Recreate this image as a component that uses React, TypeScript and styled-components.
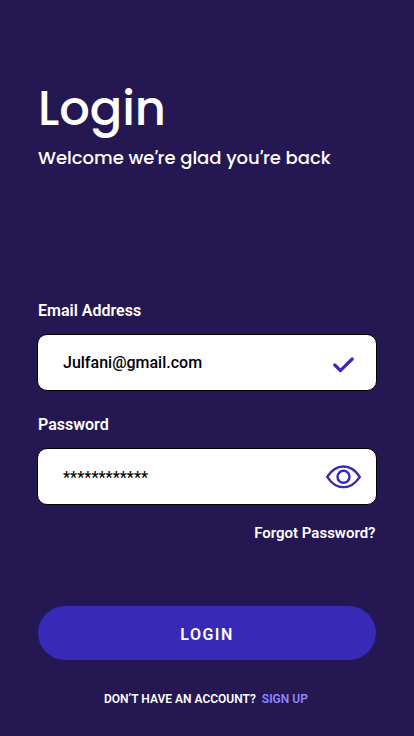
import React from 'react';
import styled, { createGlobalStyle } from 'styled-components';

const GlobalStyle = createGlobalStyle`
  *, *::before, *::after { box-sizing: border-box; }
  body { margin: 0; background: #251751; }
`;

const Screen = styled.main`
  width: 414px;
  height: 736px;
  padding: 80px 37px 0;
  display: flex;
  flex-direction: column;
  overflow: hidden;
  background: #251751;
  color: #fff;
  font-family: Roboto, sans-serif;
`;

const Header = styled.header`
  height: 220px;
  padding-left: 1px;
  font-family: Poppins, Inter, sans-serif;
  font-feature-settings: 'cv11';
  white-space: nowrap;
`;

const Title = styled.h1`
  margin: 0;
  font-size: 48px;
  font-weight: 500;
  line-height: 57px;
  letter-spacing: -0.1px;
`;

const Subtitle = styled.p`
  margin: 9px 0 0;
  font-size: 18px;
  font-weight: 500;
  line-height: 24px;
  letter-spacing: -0.02px;
`;

const Apostrophe = styled.span`
  margin-right: -0.7px;
  font-family: Roboto, sans-serif;
`;

const Form = styled.form`
  display: flex;
  flex-direction: column;
`;

const Field = styled.div`
  height: 114px;
`;

const Label = styled.label`
  display: block;
  height: 34px;
  padding-left: 1px;
  font-size: 16px;
  font-weight: 600;
  line-height: 21px;
`;

const InputBox = styled.div`
  height: 57px;
  display: flex;
  align-items: center;
  border: 1px solid #000;
  border-radius: 10px;
  background: #fff;
`;

const Input = styled.input<{ $top?: number }>`
  flex: 1;
  min-width: 0;
  height: 55px;
  padding: ${(p) => p.$top ?? 0}px 0 0 25px;
  border: 0;
  outline: 0;
  background: none;
  color: #000;
  font: 500 16px Roboto, sans-serif;
`;

const IconSlot = styled.span<{ $right: number; $top?: number }>`
  display: flex;
  margin-right: ${(p) => p.$right}px;
  padding-top: ${(p) => p.$top ?? 0}px;
`;

const Forgot = styled.a`
  height: 84px;
  margin-top: -6px;
  padding-right: 1.5px;
  align-self: flex-end;
  font-size: 15px;
  font-weight: 600;
  line-height: 22px;
`;

const SubmitButton = styled.button`
  height: 54px;
  margin: 0 1px;
  padding: 3px 0 0;
  border: 0;
  border-radius: 27px;
  background: #3829b7;
  color: #fff;
  font: 600 16px Roboto, sans-serif;
  letter-spacing: 1.5px;
`;

const Footer = styled.footer`
  display: flex;
  gap: 6px;
  margin: 31px 0 0 67px;
  font-size: 12px;
  font-weight: 600;
  line-height: 16px;
  white-space: nowrap;
`;

const SignUp = styled.a`
  color: #9386fa;
`;

const CheckIcon = () => (
  <svg width="22" height="18" viewBox="0 0 22 18" fill="none">
    <path d="M1.8 9 L7.4 14.6 L19.2 3" stroke="#3829b7" strokeWidth="3.2" strokeLinecap="round" />
  </svg>
);

const EyeIcon = () => (
  <svg width="36" height="24" viewBox="0 0 36 24" fill="none" stroke="#3829b7" strokeWidth="2.4">
    <path d="M1.2 11.8 C10.2 -1.9 24.8 -1.9 33.8 11.8 C24.8 25.5 10.2 25.5 1.2 11.8 Z" strokeLinejoin="round" />
    <circle cx="17.5" cy="11.8" r="6" />
  </svg>
);

export default function App() {
  return (
    <>
      <GlobalStyle />
      <Screen>
        <Header>
          <Title>Login</Title>
          <Subtitle>
            Welcome we<Apostrophe>’</Apostrophe>re glad you<Apostrophe>’</Apostrophe>re back
          </Subtitle>
        </Header>
        <Form onSubmit={(e) => e.preventDefault()}>
          <Field>
            <Label htmlFor="email">Email Address</Label>
            <InputBox>
              <Input id="email" defaultValue="Julfani@gmail.com" />
              <IconSlot $right={21} $top={4}><CheckIcon /></IconSlot>
            </InputBox>
          </Field>
          <Field>
            <Label htmlFor="password">Password</Label>
            <InputBox>
              <Input id="password" defaultValue="************" $top={2} />
              <IconSlot $right={14}><EyeIcon /></IconSlot>
            </InputBox>
          </Field>
          <Forgot>Forgot Password?</Forgot>
          <SubmitButton type="submit">LOGIN</SubmitButton>
        </Form>
        <Footer>
          <span>DON’T HAVE AN ACCOUNT?</span>
          <SignUp>SIGN UP</SignUp>
        </Footer>
      </Screen>
    </>
  );
}
